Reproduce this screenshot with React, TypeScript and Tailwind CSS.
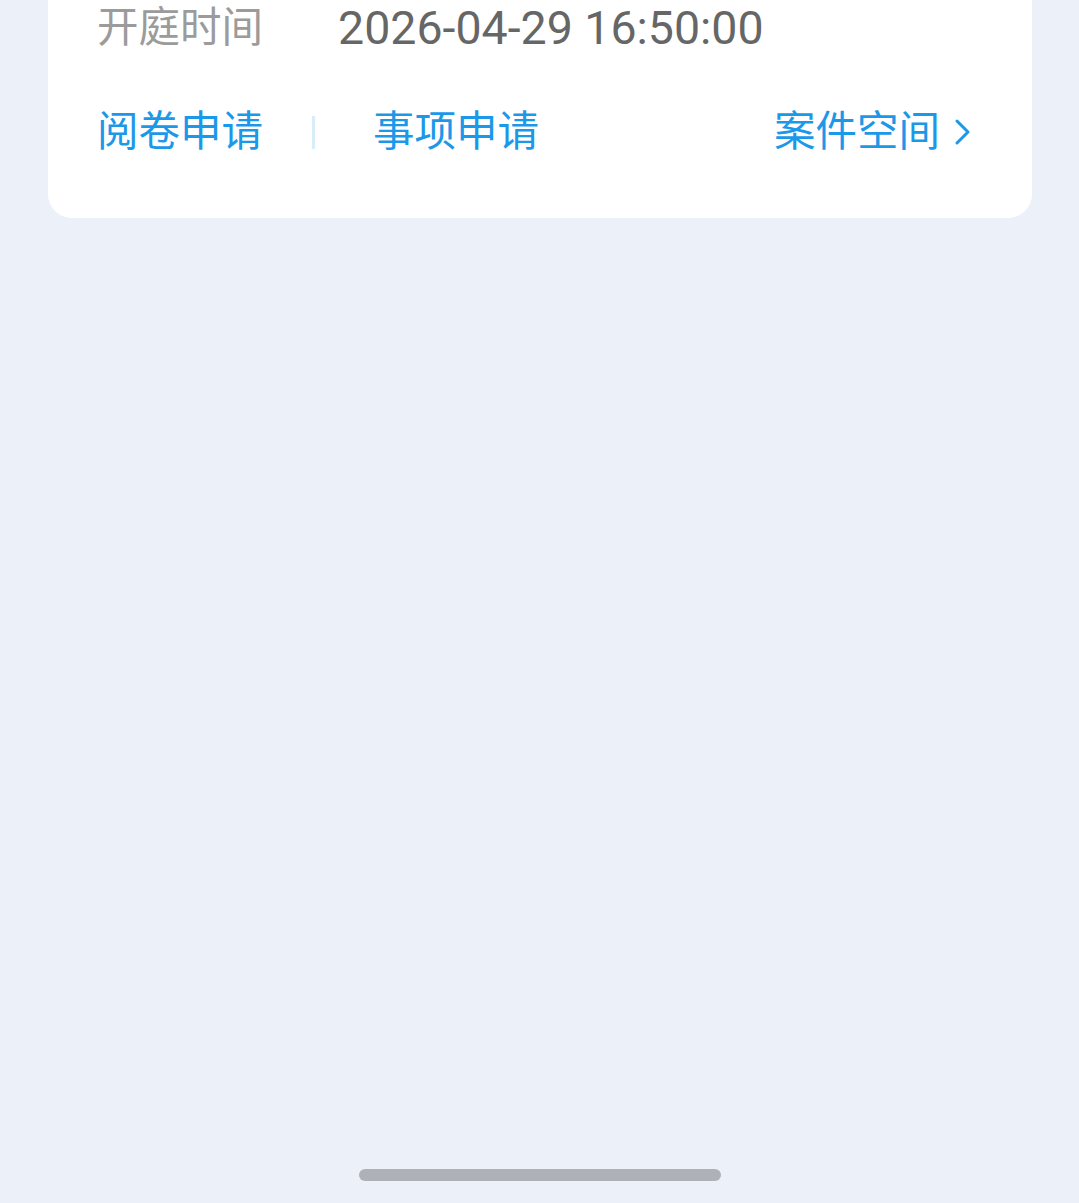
export default function App() {
  return (
    <div
      className="min-h-[1203px] w-full bg-[#ECF0F8] flex flex-col relative"
      style={{ fontFamily: 'Roboto, "Noto Sans CJK SC", sans-serif' }}
    >
      <div className="ml-[48px] w-[984px] rounded-b-[24px] bg-white pl-[49px] pr-[60px] pb-[58px]">
        <div className="flex h-[56px] items-center">
          <span className="w-[241px] text-[41.5px] leading-none text-[#9B9B9B]">开庭时间</span>
          <span className="text-[46.5px] leading-none text-[#666666]">2026-04-29 16:50:00</span>
        </div>
        <div className="mt-[48px] flex h-[56px] items-center">
          <span className="text-[41.5px] leading-none text-[#1C98E9]">阅卷申请</span>
          <span className="ml-[49px] h-[33px] w-[3px] bg-[#D9ECF9]" />
          <span className="ml-[58px] text-[41.5px] leading-none text-[#1C98E9]">事项申请</span>
          <div className="ml-auto flex items-center">
            <span className="text-[41.5px] leading-none text-[#1C98E9]">案件空间</span>
            <svg className="ml-[14px]" width="18" height="28" viewBox="0 0 18 28" fill="none">
              <path d="M3 3 L14 14 L3 25" stroke="#1C98E9" strokeWidth="3" strokeLinecap="round" strokeLinejoin="round" />
            </svg>
          </div>
        </div>
      </div>
      <div className="absolute bottom-[22px] left-[359px] h-[12px] w-[362px] rounded-full bg-[#AEB1B7]" />
    </div>
  );
}
